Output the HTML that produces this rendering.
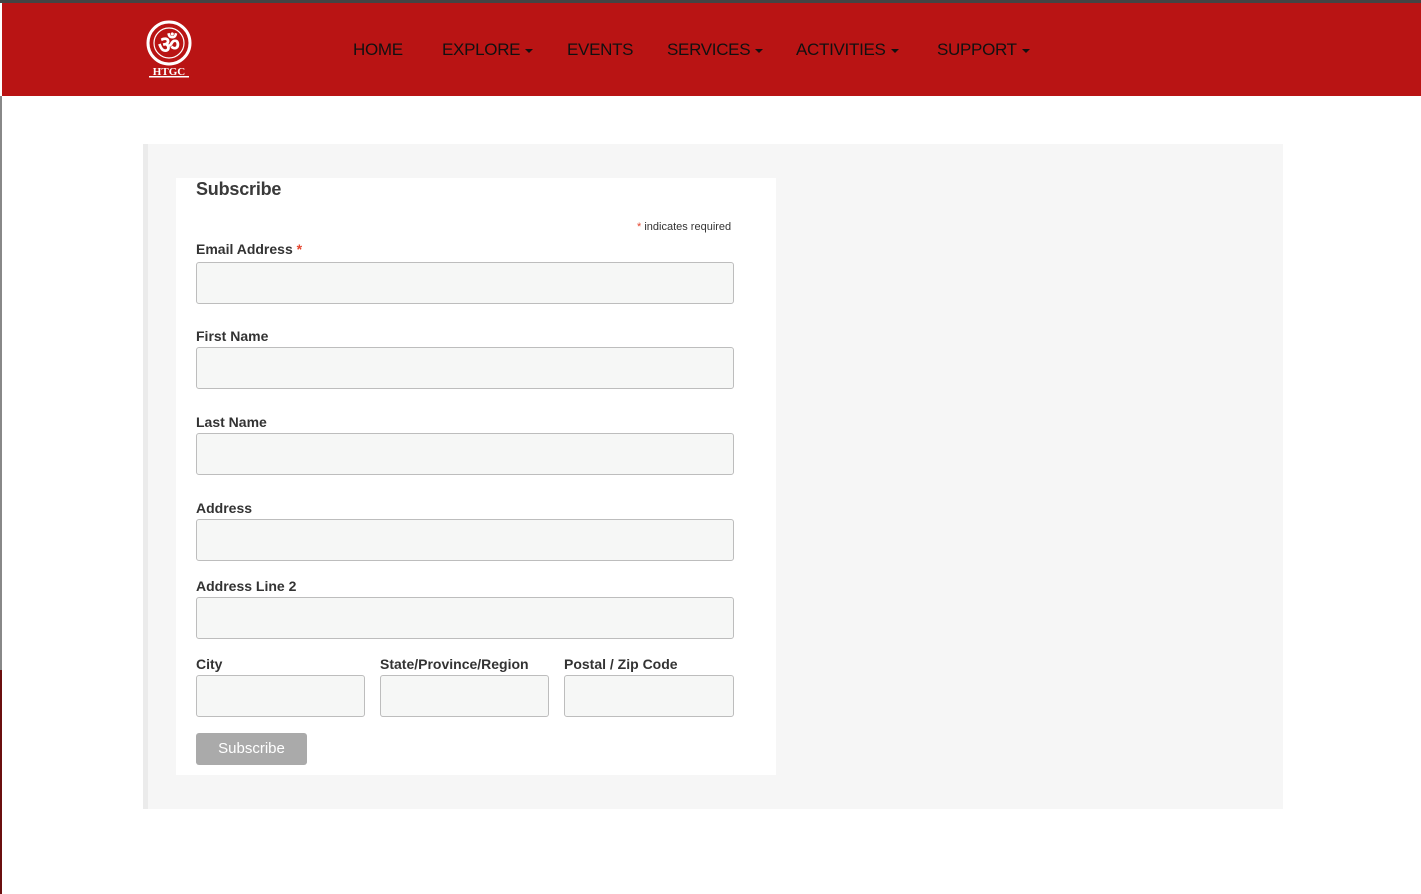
<!DOCTYPE html>
<html><head><style>
*{margin:0;padding:0;box-sizing:border-box}
body{width:1421px;height:894px;overflow:hidden;background:#fff;font-family:"Liberation Sans",sans-serif;position:relative}
.top{position:absolute;left:0;top:0;width:1421px;height:3px;background:#444}
.nav{position:absolute;left:2px;top:3px;width:1419px;height:93px;background:#b91414}
.lb{position:absolute;left:0;top:96px;width:2px;height:574px;background:#888}
.lb2{position:absolute;left:0;top:670px;width:2px;height:224px;background:#6b0f0f}
.nav a{position:absolute;top:37px;font-size:17px;letter-spacing:-0.3px;color:#111;text-decoration:none}
.car{display:inline-block;width:0;height:0;border-left:4px solid transparent;border-right:4px solid transparent;border-top:4px solid #111;vertical-align:middle;margin-left:5px}
.panel{position:absolute;left:143px;top:144px;width:1140px;height:665px;background:#f6f6f6;border-left:5px solid #ebebeb}
.form{position:absolute;left:176px;top:178px;width:600px;height:597px;background:#fff}
.h{position:absolute;left:196px;top:179px;font-size:18px;letter-spacing:-0.2px;font-weight:bold;color:#3a3a3a}
.lab{position:absolute;font-size:14px;font-weight:bold;color:#333}
.in{position:absolute;height:42px;background:#f6f7f6;border:1px solid #bdbdbd;border-radius:3px}
.r{color:#e4452e}
.btn{position:absolute;left:196px;top:733px;width:111px;height:32px;background:#aaa;border-radius:3px;color:#fff;font-size:15px;text-align:center;line-height:32px}
</style></head><body>
<div class="top"></div>
<div class="nav">
<svg style="position:absolute;left:142px;top:16px" width="50" height="60" viewBox="0 0 50 60">
<circle cx="25" cy="24" r="21" fill="none" stroke="#fff" stroke-width="3"/>
<circle cx="25" cy="24" r="15" fill="none" stroke="#fff" stroke-width="1.2"/>
<text x="25" y="34" text-anchor="middle" font-size="24" font-weight="bold" fill="#fff" font-family="DejaVu Sans">ॐ</text>
<text x="25" y="56" text-anchor="middle" font-size="11" font-weight="bold" fill="#fff" font-family="Liberation Serif">HTGC</text>
<rect x="5" y="57" width="40" height="1.5" fill="#fff"/>
</svg>
<a style="left:351px">HOME</a>
<a style="left:440px">EXPLORE<span class="car"></span></a>
<a style="left:565px">EVENTS</a>
<a style="left:665px">SERVICES<span class="car"></span></a>
<a style="left:794px">ACTIVITIES<span class="car"></span></a>
<a style="left:935px">SUPPORT<span class="car"></span></a>
</div>
<div class="lb"></div><div class="lb2"></div>
<div class="panel"></div>
<div class="form"></div>
<div class="h">Subscribe</div>
<div style="position:absolute;left:637px;top:221px;font-size:11px;color:#333"><span class="r">*</span> indicates required</div>
<div class="lab" style="left:196px;top:241px">Email Address <span class="r">*</span></div>
<div class="in" style="left:196px;top:262px;width:538px"></div>
<div class="lab" style="left:196px;top:328px">First Name</div>
<div class="in" style="left:196px;top:347px;width:538px"></div>
<div class="lab" style="left:196px;top:414px">Last Name</div>
<div class="in" style="left:196px;top:433px;width:538px"></div>
<div class="lab" style="left:196px;top:500px">Address</div>
<div class="in" style="left:196px;top:519px;width:538px"></div>
<div class="lab" style="left:196px;top:578px">Address Line 2</div>
<div class="in" style="left:196px;top:597px;width:538px"></div>
<div class="lab" style="left:196px;top:656px">City</div>
<div class="lab" style="left:380px;top:656px">State/Province/Region</div>
<div class="lab" style="left:564px;top:656px">Postal / Zip Code</div>
<div class="in" style="left:196px;top:675px;width:169px"></div>
<div class="in" style="left:380px;top:675px;width:169px"></div>
<div class="in" style="left:564px;top:675px;width:170px"></div>
<div class="btn">Subscribe</div>
</body></html>
